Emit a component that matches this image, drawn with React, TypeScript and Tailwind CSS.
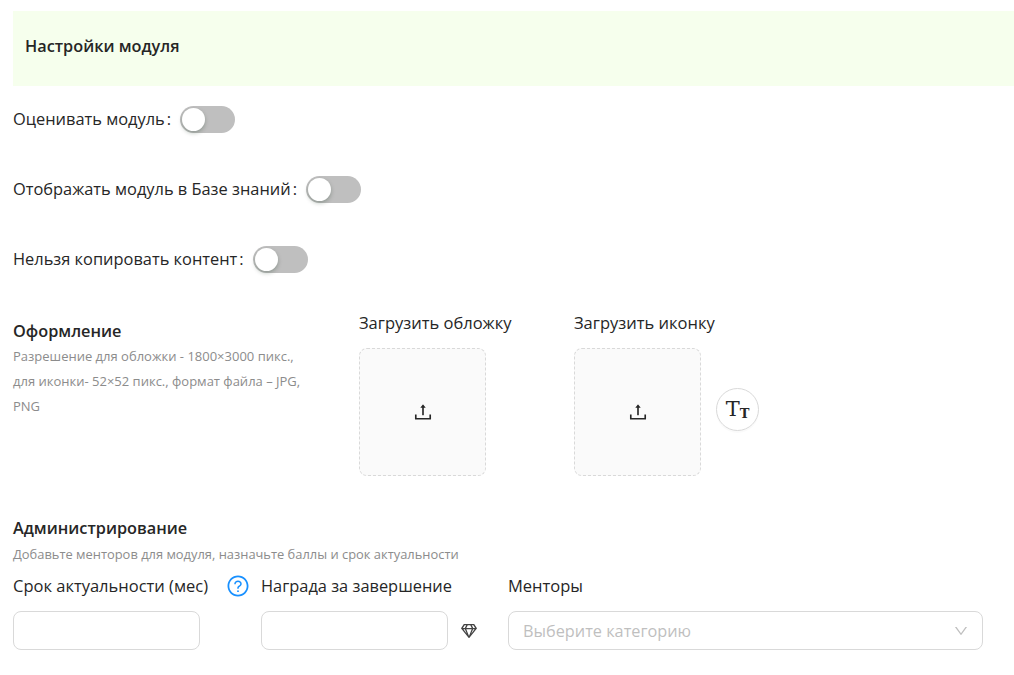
import { AiOutlineDown, AiOutlineQuestionCircle, AiOutlineUpload } from "react-icons/ai";
import { FaRegGem } from "react-icons/fa";

const Toggle = () => (
	<div className="h-[27px] w-[55px] rounded-full bg-[#bfbfbf] p-[2px]">
		<div className="h-[23px] w-[23px] rounded-full bg-white shadow-[0_2px_4px_rgba(0,35,11,0.25)]" />
	</div>
);

const SwitchRow = ({ label }: { label: string }) => (
	<div className="flex h-[27px] items-center gap-[9px] text-[16.4px] text-[#262626]">
		<span className="pb-[1px]">
			{label}
			<span className="ml-[2px]">:</span>
		</span>
		<Toggle />
	</div>
);

const UploadBox = ({ label }: { label: string }) => (
	<div className="w-[127px]">
		<div className="mb-[13px] h-[24px] whitespace-nowrap text-[16.5px] leading-[24px] text-[#262626]">{label}</div>
		<div className="flex h-[128px] w-[127px] items-center justify-center rounded-lg border border-dashed border-[#d9d9d9] bg-[#fafafa]">
			<AiOutlineUpload className="text-[#262626]" size={22} />
		</div>
	</div>
);

const App = () => {
	return (
		<div className="h-[675px] overflow-hidden bg-white pl-[13px] pt-[11px] font-['Open_Sans',sans-serif]">
			<div className="flex h-[75px] items-center bg-[#f6ffed] pb-[5px] pl-[12px] text-[16.3px] font-semibold text-[#262626]">
				Настройки модуля
			</div>

			<div className="mt-[20px] flex flex-col gap-[43px]">
				<SwitchRow label="Оценивать модуль" />
				<SwitchRow label="Отображать модуль в Базе знаний" />
				<SwitchRow label="Нельзя копировать контент" />
			</div>

			<div className="mt-[38px] flex">
				<div className="w-[346px] pt-[8px]">
					<h3 className="text-[16.3px] font-semibold leading-[24px] text-[#262626]">Оформление</h3>
					<p className="mt-[1px] w-[300px] text-[13px] leading-[25px] text-[#8c8c8c]">
						Разрешение для обложки - 1800×3000 пикс., для иконки- 52×52 пикс., формат файла – JPG, PNG
					</p>
				</div>
				<div className="mr-[88px]">
					<UploadBox label="Загрузить обложку" />
				</div>
				<UploadBox label="Загрузить иконку" />
				<div className="ml-[15px] mt-[77px] flex h-[43px] w-[43px] items-end justify-center rounded-full border border-[#d9d9d9] pb-[10px] font-['DejaVu_Serif',serif] leading-none text-[#262626] shadow-[0_2px_0_rgba(0,0,0,0.02)]">
					<span className="text-[21px] leading-none">T</span>
					<span className="text-[13px] font-bold leading-none">T</span>
				</div>
			</div>

			<div className="mt-[40px]">
				<h3 className="text-[16.3px] font-semibold leading-[24px] text-[#262626]">Администрирование</h3>
				<p className="mt-[4px] text-[12.9px] leading-[20px] text-[#8c8c8c]">
					Добавьте менторов для модуля, назначьте баллы и срок актуальности
				</p>
				<div className="mt-[10px] flex">
					<div className="w-[248px]">
						<div className="flex h-[24px] items-center text-[16.5px] text-[#262626]">
							<span className="w-[213px] whitespace-nowrap">Срок актуальности (мес)</span>
							<AiOutlineQuestionCircle className="text-[#1890ff]" size={24} />
						</div>
						<div className="mt-[13px] h-[39px] w-[187px] rounded-lg border border-[#d9d9d9]" />
					</div>
					<div className="w-[247px]">
						<div className="h-[24px] text-[16.4px] leading-[24px] text-[#262626]">Награда за завершение</div>
						<div className="mt-[13px] flex items-center">
							<div className="h-[39px] w-[187px] rounded-lg border border-[#d9d9d9]" />
							<FaRegGem className="ml-[13px] text-[#434343]" size={16} />
						</div>
					</div>
					<div className="w-[475px]">
						<div className="h-[24px] text-[16.5px] leading-[24px] text-[#262626]">Менторы</div>
						<div className="mt-[13px] flex h-[39px] items-center justify-between rounded-lg border border-[#d9d9d9] pl-[14px] pr-[13px] text-[16.3px] text-[#bfbfbf]">
							<span className="pt-[2px]">Выберите категорию</span>
							<AiOutlineDown className="text-[#bfbfbf]" size={16} />
						</div>
					</div>
				</div>
			</div>
		</div>
	);
};

export default App;
